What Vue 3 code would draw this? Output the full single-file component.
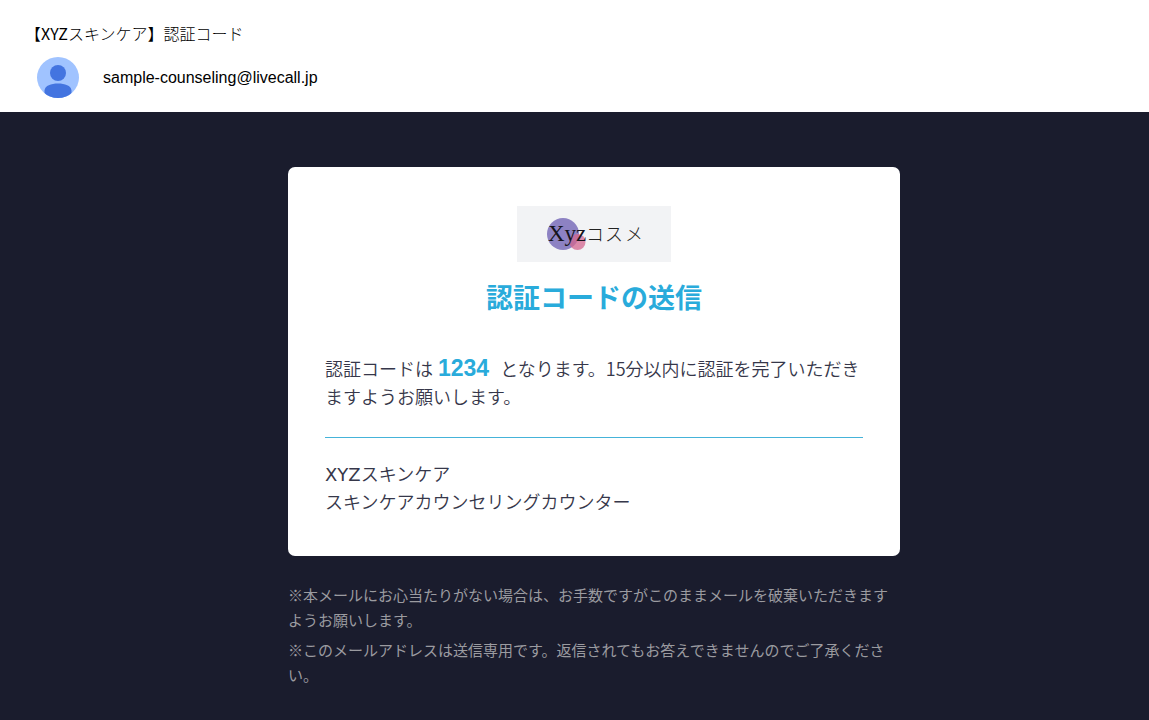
<script setup>
const sender = 'sample-counseling@livecall.jp'
const code = '1234'
const notes = [
  '※本メールにお心当たりがない場合は、お手数ですがこのままメールを破棄いただきますようお願いします。',
  '※このメールアドレスは送信専用です。返信されてもお答えできませんのでご了承ください。',
]
</script>

<template>
  <div class="page">
    <header class="mail-head">
      <h1 class="subject">【<span class="brand">XYZ</span>スキンケア】認証コード</h1>
      <div class="sender">
        <svg class="avatar" viewBox="0 0 42 42" aria-hidden="true">
          <defs>
            <clipPath id="avatar-clip"><ellipse cx="21" cy="20.500" rx="21" ry="20.500" /></clipPath>
          </defs>
          <ellipse cx="21" cy="20.500" rx="21" ry="20.500" fill="#a0c3ff" />
          <g clip-path="url(#avatar-clip)" fill="#4374e0">
            <circle cx="21" cy="16" r="8" />
            <path d="M7.500 42V33.500C8 28.500 14 26.500 21 26.500S34 28.500 34.500 33.500V42Z" />
          </g>
        </svg>
        <span class="address">{{ sender }}</span>
      </div>
    </header>

    <main class="mail-body">
      <div class="column">
        <section class="card">
          <svg class="logo" viewBox="0 0 154 56" role="img" aria-label="Xyzコスメ">
            <rect width="154" height="56" fill="#f2f3f5" />
            <circle cx="46" cy="28" r="16" fill="#8d82c3" />
            <circle cx="60.500" cy="36" r="8" fill="#d3668f" fill-opacity="0.750" />
            <text class="logo-latin" x="31" y="35">Xyz</text>
            <text class="logo-kana" x="69" y="35">コ</text>
            <text class="logo-kana" x="88" y="35">ス</text>
            <text class="logo-kana" x="108" y="35">メ</text>
          </svg>
          <h2 class="title">認証コードの送信</h2>
          <p class="text">
            <span class="line">認証コードは<strong class="code">{{ code }}</strong>となります。15分以内に認証を完了いただき</span>ますようお願いします。
          </p>
          <hr class="rule" />
          <p class="text"><span class="latin">XYZ</span>スキンケア<br />スキンケアカウンセリングカウンター</p>
        </section>
        <footer class="notes">
          <p v-for="note in notes" :key="note">{{ note }}</p>
        </footer>
      </div>
    </main>
  </div>
</template>

<style>
body {
  margin: 0;
  background: #1a1c2d;
}
</style>

<style scoped>
.page {
  display: flex;
  flex-direction: column;
  min-height: 100vh;
  font-family: "Noto Sans CJK JP", sans-serif;
  color: #000;
}
.mail-head {
  box-sizing: border-box;
  padding: 21px 25px 13px;
  background: #fff;
}
.subject {
  margin: 0;
  font-size: 16px;
  line-height: 24px;
  font-weight: 300;
}
.brand {
  font-weight: 400;
}
.sender {
  display: flex;
  align-items: center;
  gap: 24px;
  margin-top: 12px;
  padding-left: 12px;
}
.avatar {
  width: 42px;
  height: 42px;
}
.address {
  font-family: "Liberation Sans", Arial, sans-serif;
  font-size: 16px;
  line-height: 20px;
}
.mail-body {
  flex: 1;
  padding: 55px 0 24px 39px;
  background: #1a1c2d;
}
.column {
  max-width: 612px;
  margin: 0 auto;
}
.card {
  padding: 39px 37px 41px;
  border-radius: 7px;
  background: #fff;
  color: #36374a;
}
.logo {
  display: block;
  width: 154px;
  height: 56px;
  margin: 0 auto;
}
.logo-latin {
  font-family: "Liberation Serif", serif;
  font-size: 23px;
  fill: #15141c;
}
.logo-kana {
  font-family: "Noto Sans CJK JP", sans-serif;
  font-weight: 300;
  font-size: 18px;
  fill: #222;
}
.title {
  margin: 15px 0 37px;
  font-size: 27px;
  line-height: 40px;
  font-weight: 700;
  text-align: center;
  color: #29abdb;
}
.text {
  margin: 0;
  font-size: 18px;
  line-height: 28px;
  font-weight: 350;
}
.line {
  display: block;
  white-space: nowrap;
}
.code {
  margin: 0 11px 0 5px;
  font-family: "Liberation Sans", Arial, sans-serif;
  font-size: 23px;
  line-height: 24px;
  font-weight: 700;
  color: #29abdb;
}
.latin {
  font-family: "DejaVu Sans", sans-serif;
  font-weight: 400;
  line-height: 20px;
}
.rule {
  margin: 27px 0 21px;
  border: 0;
  border-top: 1px solid #45b3d9;
}
.notes {
  padding-top: 26px;
  font-size: 15px;
  line-height: 25px;
  color: #9b9ba0;
}
.notes p {
  margin: 0 0 5px;
}
</style>
